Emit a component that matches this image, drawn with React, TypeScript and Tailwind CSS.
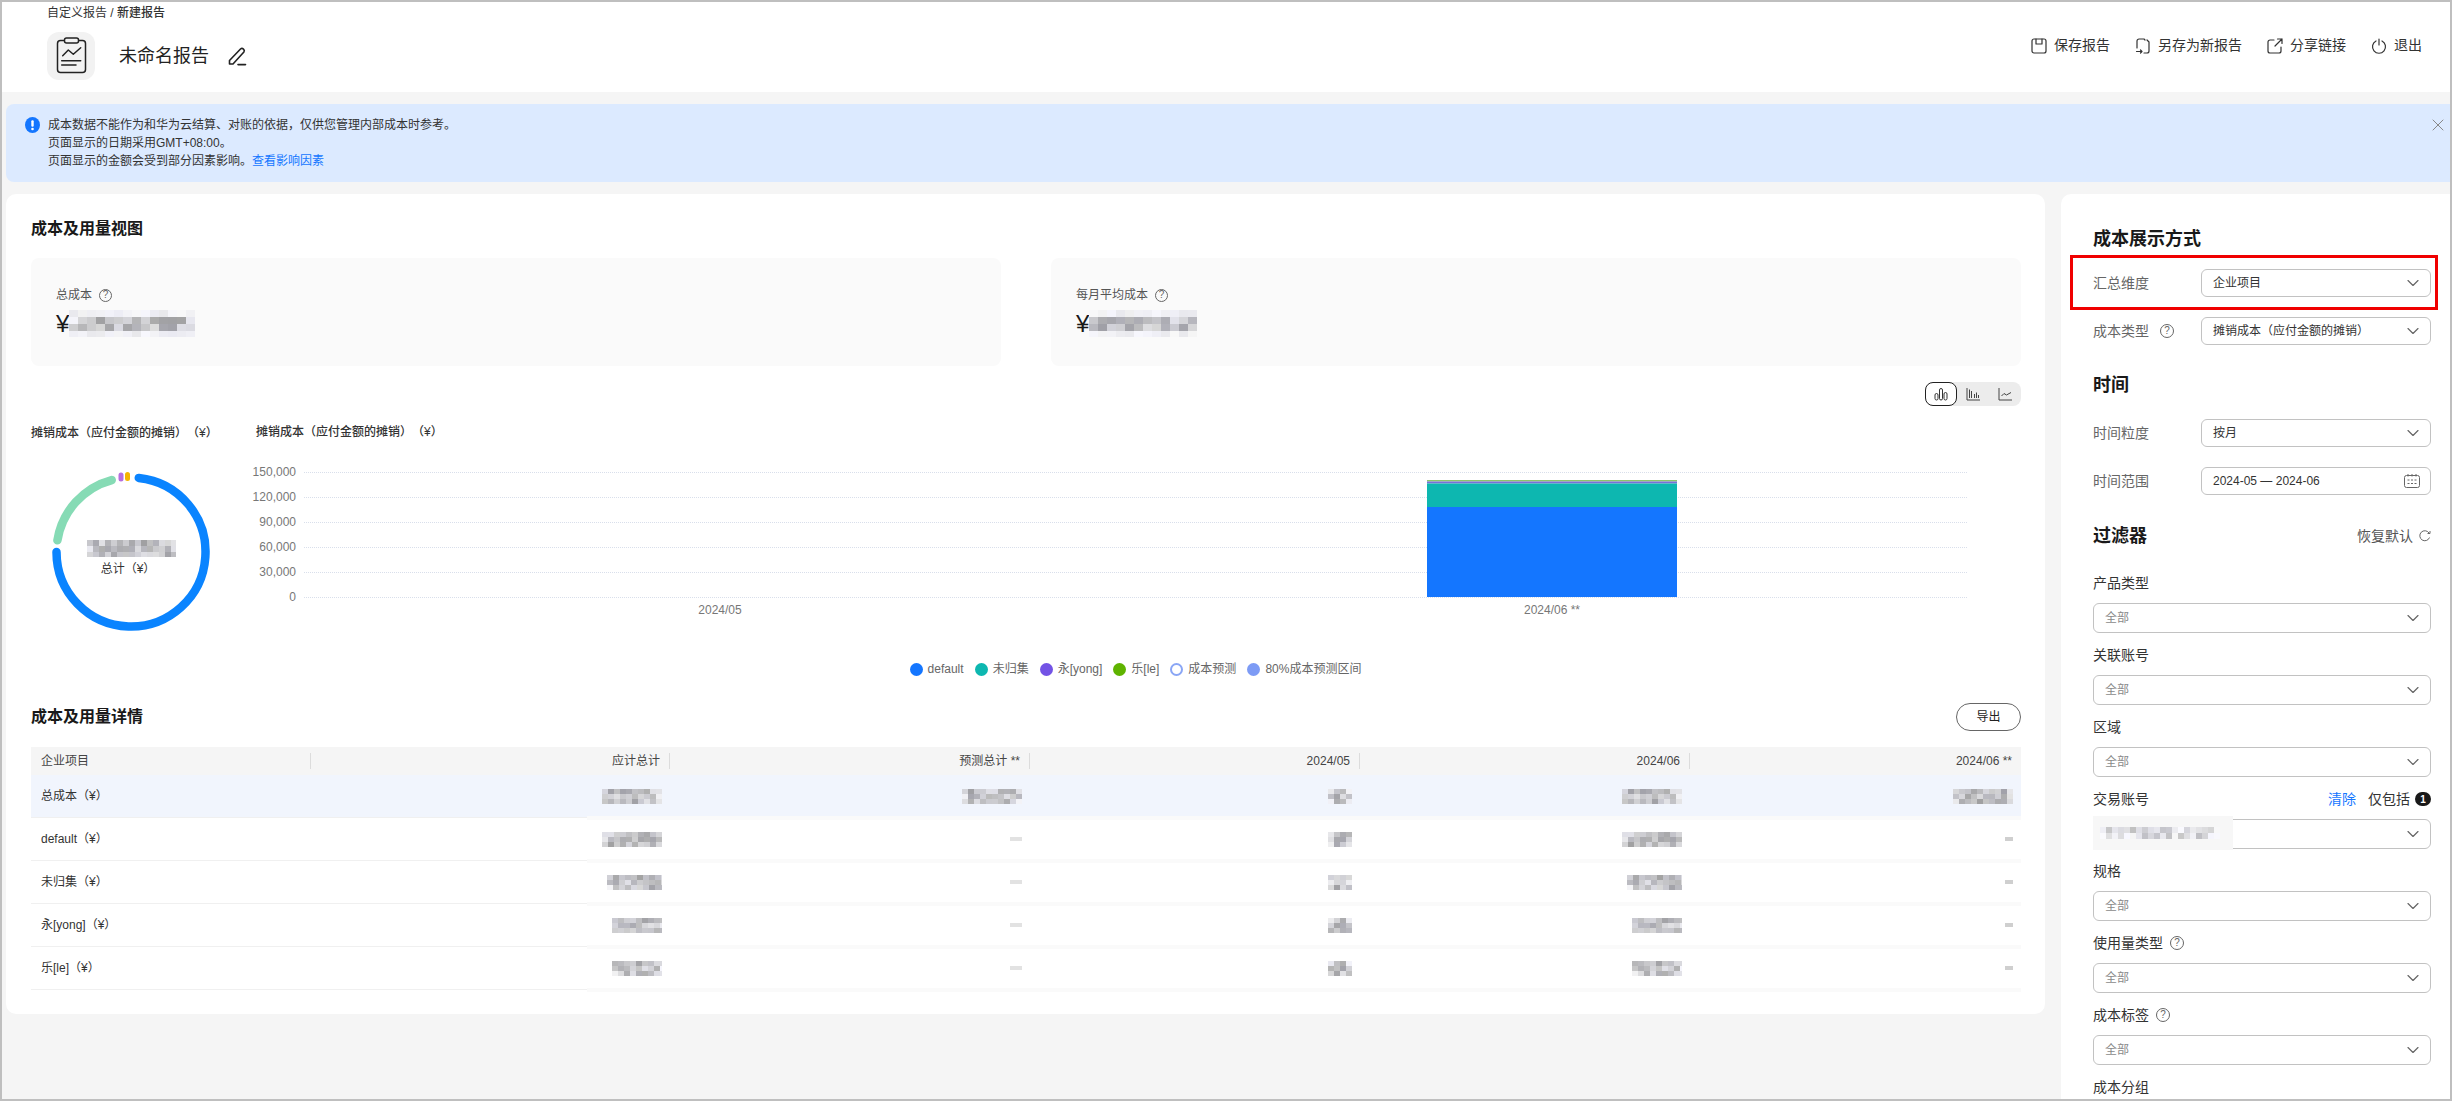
import { ChevronDown, X } from "lucide-react";

// ── Small building blocks ─────────────────────────────────────────────────────

// pixelated patch that stands in for the masked numbers in the screenshot
function Mosaic({
  w,
  h,
  cell = 9,
  cellH = cell,
  seed = 1,
  lift = 0,
}: {
  w: number;
  h: number;
  cell?: number;
  cellH?: number;
  seed?: number;
  lift?: number;
}) {
  const rects = [];
  let n = seed * 17.3;
  const next = () => {
    n += 1.37;
    const x = Math.sin(n * 12.9898) * 43758.5453;
    return x - Math.floor(x);
  };
  const cols = Math.ceil(w / cell);
  const rows = Math.ceil(h / cellH);
  for (let r = 0; r < rows; r++) {
    for (let c = 0; c < cols; c++) {
      const edge = rows > 3 && (r === 0 || r === rows - 1);
      const side = c === cols - 1 || c === 0;
      const base = edge ? 232 + next() * 16 : 160 + next() * 66 + (side ? 20 : 0) + lift;
      const v = Math.min(250, Math.round(base));
      const t = Math.round(next() * 8);
      rects.push(
        <rect
          key={`${r}-${c}`}
          x={c * cell}
          y={r * cellH}
          width={cell}
          height={cellH}
          fill={`rgb(${v},${v},${Math.min(255, v + t)})`}
        />
      );
    }
  }
  return (
    <svg width={w} height={h} viewBox={`0 0 ${w} ${h}`} shapeRendering="crispEdges" className="block shrink-0">
      {rects}
    </svg>
  );
}

function Help({ size = "w-[14px] h-[14px]" }: { size?: string }) {
  return (
    <span className={`${size} rounded-full border border-[#666] text-[#666] text-[10px] leading-none flex items-center justify-center shrink-0`}>
      ?
    </span>
  );
}

function Select({ text, muted, h = "h-[28px]", children }: { text?: string; muted?: boolean; h?: string; children?: React.ReactNode }) {
  return (
    <div className={`relative ${h} flex-1 flex items-center justify-between rounded-[6px] border border-[#c2c2c2] bg-white pl-[11px] pr-[7px]`}>
      <span className={`text-[12px] ${muted ? "text-[#8a8a8a]" : "text-[#333]"}`}>{text}</span>
      <ChevronDown size={20} strokeWidth={1.4} className="text-[#666]" />
      {children}
    </div>
  );
}

function FormRow({ label, help, children }: { label: string; help?: boolean; children: React.ReactNode }) {
  return (
    <div className="flex items-center">
      <div className="w-[108px] flex items-center gap-[11px] text-[14px] text-[#666]">
        <span>{label}</span>
        {help && <Help />}
      </div>
      {children}
    </div>
  );
}

function FilterGroup({
  label,
  help,
  extra,
  children,
}: {
  label: string;
  help?: boolean;
  extra?: React.ReactNode;
  children?: React.ReactNode;
}) {
  return (
    <div className="h-[72px]">
      <div className="h-[20px] flex items-center justify-between text-[14px] text-[#333]">
        <div className="flex items-center gap-[7px]">
          <span>{label}</span>
          {help && <Help />}
        </div>
        {extra}
      </div>
      <div className="mt-[10px] flex">{children}</div>
    </div>
  );
}

function ActionIcon({ children }: { children: React.ReactNode }) {
  return (
    <svg width="16" height="16" viewBox="0 0 16 16" fill="none" stroke="#333" strokeWidth="1.2" strokeLinecap="round" strokeLinejoin="round" className="shrink-0">
      {children}
    </svg>
  );
}

function HeaderAction({ label, icon }: { label: string; icon: React.ReactNode }) {
  return (
    <div className="flex items-center gap-[7px] text-[14px] text-[#333]">
      <ActionIcon>{icon}</ActionIcon>
      <span>{label}</span>
    </div>
  );
}

// ── Charts ────────────────────────────────────────────────────────────────────

function arc(start: number, end: number, r = 74.5, c = 79) {
  const pt = (deg: number) => {
    const a = (deg * Math.PI) / 180;
    return `${(c + r * Math.sin(a)).toFixed(2)} ${(c - r * Math.cos(a)).toFixed(2)}`;
  };
  const large = end - start > 180 ? 1 : 0;
  return `M${pt(start)} A${r} ${r} 0 ${large} 1 ${pt(end)}`;
}

function Donut() {
  return (
    <div className="relative w-[158px] h-[158px] ml-[21px] mt-[31px]">
      <svg width="158" height="158" viewBox="0 0 158 158" fill="none" strokeLinecap="round" strokeWidth="8.5" className="overflow-visible">
        <path d={arc(6, 270)} stroke="#0a84ff" />
        <path d={arc(279, 345)} stroke="#86dbb5" />
        <rect x="66.5" y="-0.5" width="5" height="9" rx="2.5" fill="#b56ee0" />
        <rect x="73" y="-1" width="5" height="9" rx="2.5" fill="#f5b400" />
      </svg>
      <div className="absolute left-[35px] top-[67px]">
        <Mosaic w={89} h={17} cell={6} seed={5} />
      </div>
      <div className="absolute left-0 right-[6px] top-[87px] text-center text-[12px] leading-[18px] text-[#333]">总计（¥）</div>
    </div>
  );
}

function BarChart() {
  const ticks = ["150,000", "120,000", "90,000", "60,000", "30,000", "0"];
  return (
    <svg width="1765" height="180" viewBox="0 0 1765 180" className="block mt-[4px] overflow-visible">
      {ticks.map((t, i) => (
        <g key={t}>
          <text x="40" y={31 + i * 25} textAnchor="end" fontSize="12" fill="#777">
            {t}
          </text>
          <line x1="48" x2="1711" y1={27.5 + i * 25} y2={27.5 + i * 25} stroke="#d9dfeb" strokeDasharray="1 1" />
        </g>
      ))}
      <rect x="1171" y="35" width="250" height="1.5" fill="#8cc56a" />
      <rect x="1171" y="36.5" width="250" height="2" fill="#7a6fd8" />
      <rect x="1171" y="38.5" width="250" height="23.5" fill="#0db7b0" />
      <rect x="1171" y="62" width="250" height="90" fill="#1476ff" />
      <text x="464" y="169" textAnchor="middle" fontSize="12" fill="#777">
        2024/05
      </text>
      <text x="1296" y="169" textAnchor="middle" fontSize="12" fill="#777">
        2024/06 **
      </text>
    </svg>
  );
}

const LEGEND = [
  { label: "default", dot: "bg-[#1476ff]" },
  { label: "未归集", dot: "bg-[#0db7b0]" },
  { label: "永[yong]", dot: "bg-[#7353e5]" },
  { label: "乐[le]", dot: "bg-[#5fb300]" },
  { label: "成本预测", dot: "bg-white border-2 border-[#8aa6f5]" },
  { label: "80%成本预测区间", dot: "bg-[#7d9bf5]" },
];

// ── Table ─────────────────────────────────────────────────────────────────────

const GRID = "grid grid-cols-[280px_359px_360px_330px_330px_331px]";
const HEADERS = ["企业项目", "应计总计", "预测总计 **", "2024/05", "2024/06", "2024/06 **"];
const ROWS = [
  { label: "总成本（¥）", cost: 60, fc: 60, jun: 60, fcJun: 60, bg: "bg-[#f1f5fd]" },
  { label: "default（¥）", cost: 60, fc: 0, jun: 60, fcJun: 0, bg: "" },
  { label: "未归集（¥）", cost: 55, fc: 0, jun: 55, fcJun: 0, bg: "" },
  { label: "永[yong]（¥）", cost: 50, fc: 0, jun: 50, fcJun: 0, bg: "" },
  { label: "乐[le]（¥）", cost: 50, fc: 0, jun: 50, fcJun: 0, bg: "" },
];

function Cell({ w, seed, dash, tone = "bg-[#e2e2e2]" }: { w: number; seed: number; dash: number; tone?: string }) {
  return (
    <div className="flex items-center justify-end pr-[8px]">
      {w > 0 ? <Mosaic w={w} h={15} cell={6} cellH={5} seed={seed} /> : <div className={tone} style={{ width: dash, height: 4 }} />}
    </div>
  );
}

// ── Page ──────────────────────────────────────────────────────────────────────

export default function App() {
  const filters = ["产品类型", "关联账号", "区域"];
  return (
    <div
      className="w-[2452px] h-[1101px] overflow-hidden border-2 border-[#bfbfbf] bg-[#f5f5f5] text-[#333]"
      style={{ fontFamily: '"Liberation Sans", "Noto Sans CJK SC", sans-serif' }}
    >
      <div className="h-[90px] bg-white flex justify-between">
        <div className="pl-[45px] pt-[2px]">
          <div className="text-[12px] leading-[18px]">
            自定义报告 / <span className="font-medium">新建报告</span>
          </div>
          <div className="mt-[10px] flex items-center">
            <div className="w-[48px] h-[48px] rounded-[12px] bg-[#f2f2f2]">
              <svg width="48" height="48" viewBox="0 0 48 48" fill="none" stroke="#222" strokeWidth="1.5" strokeLinecap="round" strokeLinejoin="round">
                <rect x="10.5" y="8.5" width="28" height="32" rx="3" />
                <rect x="17.5" y="6" width="14" height="5" rx="2" fill="#f2f2f2" />
                <path d="M15.7 23.7 21.3 18l5 4.3 7.4-6.6" />
                <path d="M14.7 28.7h19M14.7 33H29" />
              </svg>
            </div>
            <span className="ml-[24px] text-[18px] text-[#222]">未命名报告</span>
            <svg width="20" height="20" viewBox="0 0 20 20" fill="none" stroke="#222" strokeWidth="1.6" strokeLinejoin="round" strokeLinecap="round" className="ml-[18px]">
              <path d="M2.5 14.5 13.5 3a2.3 2.3 0 0 1 3.4 3L6 18H2.5Z" />
              <path d="M11 18.6h7.5" />
            </svg>
          </div>
        </div>
        <div className="flex items-start gap-[25px] pt-[33px] pr-[28px]">
          <HeaderAction
            label="保存报告"
            icon={
              <>
                <rect x="1" y="1" width="14" height="14" rx="2" />
                <path d="M5 1v5h6V1" />
              </>
            }
          />
          <HeaderAction
            label="另存为新报告"
            icon={
              <>
                <path d="M2 10V3a2 2 0 0 1 2-2h5l1 1M12 2l2 2v9a2 2 0 0 1-2 2H9" />
                <path d="M1.5 13.5H7M5.5 12 7 13.5 5.5 15" />
              </>
            }
          />
          <HeaderAction
            label="分享链接"
            icon={
              <>
                <path d="M7 2H3a2 2 0 0 0-2 2v9a2 2 0 0 0 2 2h9a2 2 0 0 0 2-2V9" />
                <path d="M8 8l7-7M10.5 1H15v4.5" />
              </>
            }
          />
          <HeaderAction
            label="退出"
            icon={
              <>
                <path d="M5 3a6.5 6.5 0 1 0 6 0" />
                <path d="M8 1v6" />
              </>
            }
          />
        </div>
      </div>

      <div className="pl-[4px]">
        <div className="mt-[12px] h-[78px] rounded-l-[8px] bg-[#dceaff] pl-[19px] pt-[12px] pr-[2px] flex">
          <svg width="15" height="16" viewBox="0 0 15 16" className="shrink-0 mt-[1px]">
            <ellipse cx="7.5" cy="8" rx="7.5" ry="8" fill="#1476ff" />
            <rect x="6.3" y="3.2" width="2.4" height="6.6" rx="1" fill="#fff" />
            <circle cx="7.5" cy="12" r="1.3" fill="#fff" />
          </svg>
          <div className="ml-[8px] text-[12px] leading-[18px] text-[#333]">
            <div>成本数据不能作为和华为云结算、对账的依据，仅供您管理内部成本时参考。</div>
            <div>页面显示的日期采用GMT+08:00。</div>
            <div>
              页面显示的金额会受到部分因素影响。<span className="text-[#1476ff]">查看影响因素</span>
            </div>
          </div>
          <X size={20} strokeWidth={1.2} className="ml-auto -mt-px text-[#888]" />
        </div>

        <div className="mt-[12px] flex gap-[16px] h-[905px]">
          {/* 成本及用量 */}
          <div className="w-[2039px] h-[820px] rounded-[10px] bg-white pl-[25px] pr-[24px] pt-[23px]">
            <h2 className="text-[16px] leading-[24px] font-bold text-[#191919]">成本及用量视图</h2>
            <div className="mt-[17px] grid grid-cols-2 gap-[50px]">
              <div className="h-[108px] rounded-[8px] bg-[#fafafa] pl-[25px] pt-[28px]">
                <div className="flex items-center gap-[7px] text-[12px] leading-[18px] text-[#555]">
                  总成本 <Help size="w-[13px] h-[13px]" />
                </div>
                <div className="mt-[6px] flex items-center h-[27px]">
                  <span className="text-[24px] leading-none text-[#191919]">¥</span>
                  <Mosaic w={126} h={27} cell={9} cellH={7} seed={3} />
                </div>
              </div>
              <div className="h-[108px] rounded-[8px] bg-[#fafafa] pl-[25px] pt-[28px]">
                <div className="flex items-center gap-[7px] text-[12px] leading-[18px] text-[#555]">
                  每月平均成本 <Help size="w-[13px] h-[13px]" />
                </div>
                <div className="mt-[6px] flex items-center h-[27px]">
                  <span className="text-[24px] leading-none text-[#191919]">¥</span>
                  <Mosaic w={108} h={27} cell={9} cellH={7} seed={8} />
                </div>
              </div>
            </div>

            <div className="mt-[16px] flex justify-end">
              <div className="flex h-[24px] w-[96px] rounded-[8px] bg-[#ececec]">
                <div className="w-[32px] h-[24px] rounded-[8px] border border-[#222] bg-white flex items-center justify-center">
                  <svg width="16" height="16" viewBox="0 0 16 16" fill="none" stroke="#333" strokeWidth="1">
                    <rect x="2" y="7.5" width="3" height="6.5" rx="1.5" />
                    <rect x="6.5" y="2.5" width="3" height="11.5" rx="1.5" />
                    <rect x="11" y="6.5" width="3" height="7.5" rx="1.5" />
                  </svg>
                </div>
                <div className="w-[32px] h-[24px] flex items-center justify-center">
                  <svg width="16" height="16" viewBox="0 0 16 16" fill="none" stroke="#444" strokeWidth="1">
                    <path d="M2 2v12h13M4.5 3.5V12M6.5 5V12M9.5 8V12M11.5 6.5V12M13.5 9V12" />
                  </svg>
                </div>
                <div className="w-[32px] h-[24px] flex items-center justify-center">
                  <svg width="16" height="16" viewBox="0 0 16 16" fill="none" stroke="#444" strokeWidth="1">
                    <path d="M2 2v12h13M4.5 10 7 7.5l2.5 1.5L14 6.5" />
                  </svg>
                </div>
              </div>
            </div>

            <div className="h-[280px] flex">
              <div className="w-[225px]">
                <div className="pt-[18px] text-[12px] leading-[18px] font-medium text-[#333] whitespace-nowrap">摊销成本（应付金额的摊销）<span className="ml-[6px]">（¥）</span></div>
                <Donut />
              </div>
              <div className="w-[1765px]">
                <div className="pt-[17px] text-[12px] leading-[18px] font-medium text-[#333]">摊销成本（应付金额的摊销）<span className="ml-[6px]">（¥）</span></div>
                <BarChart />
                <div className="mt-[35px] pl-[48px] pr-[54px] h-[18px] flex items-center justify-center gap-[11px]">
                  {LEGEND.map((l) => (
                    <div key={l.label} className="flex items-center gap-[5px] text-[12px] text-[#666]">
                      <span className={`w-[13px] h-[13px] rounded-full ${l.dot}`} />
                      <span>{l.label}</span>
                    </div>
                  ))}
                </div>
              </div>
            </div>

            <div className="mt-[17px] h-[28px] flex items-center justify-between">
              <h2 className="text-[16px] leading-[24px] font-bold text-[#191919]">成本及用量详情</h2>
              <button className="w-[65px] h-[28px] rounded-full border border-[#666] text-[12px] text-[#222]">导出</button>
            </div>

            <div className="mt-[16px]">
              <div className={`${GRID} h-[28px] bg-[#f5f5f5]`}>
                {HEADERS.map((h, i) => (
                  <div key={h} className="flex items-center">
                    <div
                      className={`w-full h-[16px] flex items-center text-[12px] text-[#444] ${
                        i === 0 ? "pl-[10px] border-r border-[#dcdcdc]" : i === 5 ? "justify-end pr-[9px]" : "justify-end pr-[9px] border-r border-[#dcdcdc]"
                      }`}
                    >
                      {h}
                    </div>
                  </div>
                ))}
              </div>
              {ROWS.map((r, i) => (
                <div key={r.label} className={`relative ${GRID} h-[43px] border-b border-[#f0f0f0] ${r.bg}`}>
                  <div className="flex items-center pl-[10px] text-[12px] text-[#333]">{r.label}</div>
                  <Cell w={r.cost} seed={i * 5 + 11} dash={12} />
                  <Cell w={r.fc} seed={i * 5 + 12} dash={12} />
                  <Cell w={24} seed={i * 5 + 13} dash={12} />
                  <Cell w={r.jun} seed={i * 5 + 11} dash={12} />
                  <Cell w={r.fcJun} seed={i * 5 + 14} dash={8} tone="bg-[#cfcfcf]" />
                  <div className="absolute left-[556px] right-0 -bottom-[3px] h-[4px] bg-[#fafafa]" />
                </div>
              ))}
            </div>
          </div>

          {/* 成本展示方式 */}
          <div className="flex-1 rounded-tl-[10px] bg-white pl-[32px] pr-[19px] pt-[33px]">
            <h2 className="text-[18px] leading-[24px] font-bold text-[#191919]">成本展示方式</h2>
            <div className="relative mt-[18px]">
              <FormRow label="汇总维度">
                <Select text="企业项目" />
              </FormRow>
              <div className="absolute -left-[23px] -right-[7px] -top-[14px] -bottom-[13px] border-[3px] border-[#f00000]" />
            </div>
            <div className="mt-[20px]">
              <FormRow label="成本类型" help>
                <Select text="摊销成本（应付金额的摊销）" />
              </FormRow>
            </div>

            <h2 className="mt-[28px] text-[18px] leading-[24px] font-bold text-[#191919]">时间</h2>
            <div className="mt-[22px]">
              <FormRow label="时间粒度">
                <Select text="按月" />
              </FormRow>
            </div>
            <div className="mt-[20px]">
              <FormRow label="时间范围">
                <div className="h-[28px] flex-1 flex items-center justify-between rounded-[6px] border border-[#c2c2c2] pl-[11px] pr-[10px]">
                  <span className="text-[12px] text-[#333]">2024-05 — 2024-06</span>
                  <svg width="16" height="16" viewBox="0 0 16 16" fill="none" stroke="#666" strokeWidth="1">
                    <rect x="0.5" y="2.5" width="15" height="12" rx="2" />
                    <path d="M4 1v2.5M8 1v2.5M12 1v2.5M3.5 7h2M7 7h2M10.5 7h2M3.5 10.5h2M7 10.5h2M10.5 10.5h2" />
                  </svg>
                </div>
              </FormRow>
            </div>

            <div className="mt-[29px] h-[24px] flex items-center justify-between">
              <h2 className="text-[18px] leading-[24px] font-bold text-[#191919]">过滤器</h2>
              <div className="flex items-center gap-[6px] text-[14px] text-[#555]">
                恢复默认
                <svg width="12" height="12" viewBox="0 0 12 12" fill="none" stroke="#666" strokeWidth="1">
                  <path d="M10.5 7.5A5 5 0 1 1 10 3M11 1v2.5H8.5" />
                </svg>
              </div>
            </div>

            <div className="mt-[25px]">
              {filters.map((f) => (
                <FilterGroup key={f} label={f}>
                  <Select text="全部" muted h="h-[30px]" />
                </FilterGroup>
              ))}
              <FilterGroup
                label="交易账号"
                extra={
                  <div className="flex items-center text-[14px]">
                    <span className="text-[#1476ff]">清除</span>
                    <span className="ml-[12px]">仅包括</span>
                    <span className="ml-[5px] w-[16px] h-[14px] rounded-full bg-[#191919] text-white text-[10px] font-bold flex items-center justify-center">1</span>
                  </div>
                }
              >
                <Select h="h-[30px]">
                  <div className="absolute -left-px -top-[4px] w-[140px] h-[34px] bg-[#f7f7f7] flex items-center pl-[7px]">
                    <Mosaic w={120} h={12} cell={6} seed={21} lift={30} />
                  </div>
                </Select>
              </FilterGroup>
              <FilterGroup label="规格">
                <Select text="全部" muted h="h-[30px]" />
              </FilterGroup>
              <FilterGroup label="使用量类型" help>
                <Select text="全部" muted h="h-[30px]" />
              </FilterGroup>
              <FilterGroup label="成本标签" help>
                <Select text="全部" muted h="h-[30px]" />
              </FilterGroup>
              <FilterGroup label="成本分组" />
            </div>
          </div>
        </div>
      </div>
    </div>
  );
}
